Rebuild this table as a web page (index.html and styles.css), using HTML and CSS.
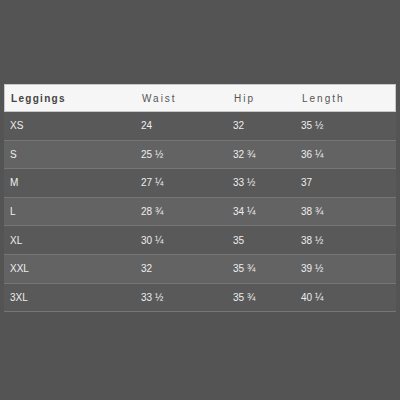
FILE: index.html
```html
<!DOCTYPE html>
<html>
<head>
<meta charset="utf-8">
<link rel="stylesheet" href="styles.css">
</head>
<body>
<div class="page">
  <div class="table">
    <div class="row head">
      <div class="cell first">Leggings</div>
      <div class="cell">Waist</div>
      <div class="cell">Hip</div>
      <div class="cell">Length</div>
    </div>
    <div class="row odd"><div class="cell">XS</div><div class="cell">24</div><div class="cell">32</div><div class="cell">35 ½</div></div>
    <div class="row even"><div class="cell">S</div><div class="cell">25 ½</div><div class="cell">32 ¾</div><div class="cell">36 ¼</div></div>
    <div class="row odd"><div class="cell">M</div><div class="cell">27 ¼</div><div class="cell">33 ½</div><div class="cell">37</div></div>
    <div class="row even"><div class="cell">L</div><div class="cell">28 ¾</div><div class="cell">34 ¼</div><div class="cell">38 ¾</div></div>
    <div class="row odd"><div class="cell">XL</div><div class="cell">30 ¼</div><div class="cell">35</div><div class="cell">38 ½</div></div>
    <div class="row even"><div class="cell">XXL</div><div class="cell">32</div><div class="cell">35 ¾</div><div class="cell">39 ½</div></div>
    <div class="row odd"><div class="cell">3XL</div><div class="cell">33 ½</div><div class="cell">35 ¾</div><div class="cell">40 ¼</div></div>
  </div>
</div>
</body>
</html>
```
FILE: styles.css
```css
html, body {
  margin: 0;
  padding: 0;
  background: #545454;
}
.page {
  width: 400px;
  height: 400px;
  padding-top: 84px;
  box-sizing: border-box;
  font-family: "Liberation Sans", Arial, sans-serif;
}
.table {
  margin-left: 4px;
  width: 392px;
}
.row {
  display: grid;
  grid-template-columns: 131px 92px 68px 101px;
  align-items: center;
  box-sizing: border-box;
}
.head {
  height: 28px;
  background: #f6f6f6;
  border: 1px solid #c8c8c8;
  color: #555555;
  font-size: 10px;
  letter-spacing: 2px;
}
.head .first {
  font-weight: bold;
  letter-spacing: 1.3px;
  color: #444444;
}
.cell {
  padding-left: 6px;
  white-space: nowrap;
}
.odd, .even {
  height: 28.6px;
  color: #eeeeee;
  font-size: 10px;
  border-bottom: 1.5px solid #767676;
}
.odd { background: #595959; }
.even { background: #636363; }
```
